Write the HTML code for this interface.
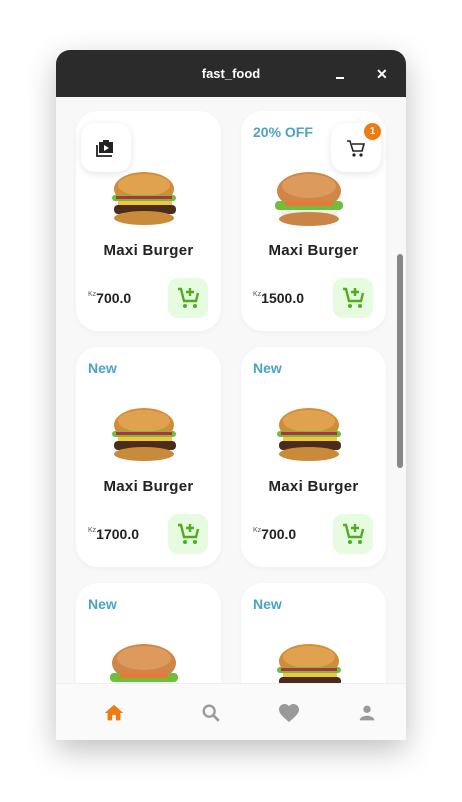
<!DOCTYPE html>
<html><head><meta charset="utf-8"><style>
*{margin:0;padding:0;box-sizing:border-box}
body{width:462px;height:802px;background:#fff;font-family:"Liberation Sans",sans-serif;position:relative;overflow:hidden}
.win{position:absolute;left:56px;top:50px;width:350px;height:690px;background:#f8f8f8;border-radius:14px 14px 0 0;overflow:hidden;box-shadow:0 10px 30px rgba(0,0,0,.25)}
.tb{position:absolute;left:0;top:0;width:350px;height:47px;background:#2b2b2b;color:#fff;font-size:13px;font-weight:bold;text-align:center;line-height:48px}
.card{position:absolute;width:145px;height:220px;background:#fff;border-radius:22px;box-shadow:0 2px 6px rgba(0,0,0,.04)}
.tag{position:absolute;left:12px;top:13px;color:#4aa3c4;font-weight:bold;font-size:14px}
.name{position:absolute;left:0;width:145px;top:131px;text-align:center;font-weight:bold;font-size:15px;color:#222;letter-spacing:.3px}
.price{position:absolute;left:12px;top:179px;font-weight:bold;font-size:14px;color:#222}
.price sup{font-size:7px;font-weight:normal;color:#555;vertical-align:7px}
.add{position:absolute;left:92px;top:167px;width:40px;height:40px;background:#e7fbe0;border-radius:10px}
.add svg{position:absolute;left:8px;top:8px}
.bg{position:absolute;left:28px;top:60px}
.fab{position:absolute;width:50px;height:49px;background:#fff;border-radius:14px;box-shadow:0 2px 8px rgba(0,0,0,.1)}
.nav{position:absolute;left:0;top:633px;width:350px;height:57px;background:#fafafa;border-top:1px solid #eee}
.scroll{position:absolute;left:341px;top:204px;width:6px;height:214px;background:#888;border-radius:3px}
</style></head><body>
<div class="win">
<div class="tb">fast_food
<span style="position:absolute;left:280px;top:27px;width:8px;height:2px;background:#fff"></span>
<span style="position:absolute;left:320px;top:0;font-size:14px">✕</span></div>

<svg width="0" height="0" style="position:absolute"><defs>
<g id="b1"><ellipse cx="40" cy="18" rx="30" ry="17" fill="#d38b3a"/><ellipse cx="40" cy="14" rx="26" ry="11" fill="#e0a24f"/>
<rect x="8" y="24" width="64" height="6" rx="3" fill="#6fbf3a"/><rect x="12" y="25" width="56" height="3" fill="#b3304a"/>
<rect x="14" y="30" width="54" height="5" fill="#f2c53b"/><rect x="10" y="34" width="62" height="9" rx="4" fill="#4a2c1c"/>
<ellipse cx="40" cy="47" rx="30" ry="7" fill="#c98a3a"/></g>
<g id="b2"><ellipse cx="40" cy="20" rx="32" ry="19" fill="#cf8646"/><ellipse cx="40" cy="15" rx="27" ry="12" fill="#dc9a5c"/>
<rect x="6" y="30" width="68" height="9" rx="4" fill="#6fbf3a"/><rect x="16" y="30" width="48" height="5" fill="#e8793c"/>
<rect x="12" y="39" width="56" height="5" fill="#f0eee8"/><ellipse cx="40" cy="48" rx="30" ry="7" fill="#c98546"/></g>
<g id="cart"><path d="M2 3h3l3 12h12l2-8" fill="none" stroke="#4caf1a" stroke-width="2.4"/><circle cx="9" cy="20" r="2" fill="#4caf1a"/><circle cx="19" cy="20" r="2" fill="#4caf1a"/><path d="M14 2v8M10 6h8" stroke="#4caf1a" stroke-width="2.4"/></g>
</defs></svg>

<div class="card" style="left:20px;top:61px">
<svg class="bg" width="80" height="56"><use href="#b1"/></svg>
<div class="name">Maxi Burger</div><div class="price"><sup>Kz</sup>700.0</div>
<div class="add"><svg width="24" height="24"><use href="#cart"/></svg></div></div>
<div class="card" style="left:185px;top:61px"><div class="tag">20% OFF</div>
<svg class="bg" width="80" height="56"><use href="#b2"/></svg>
<div class="name">Maxi Burger</div><div class="price"><sup>Kz</sup>1500.0</div>
<div class="add"><svg width="24" height="24"><use href="#cart"/></svg></div></div>

<div class="card" style="left:20px;top:297px"><div class="tag">New</div>
<svg class="bg" width="80" height="56"><use href="#b1"/></svg>
<div class="name">Maxi Burger</div><div class="price"><sup>Kz</sup>1700.0</div>
<div class="add"><svg width="24" height="24"><use href="#cart"/></svg></div></div>
<div class="card" style="left:185px;top:297px"><div class="tag">New</div>
<svg class="bg" width="80" height="56"><use href="#b1"/></svg>
<div class="name">Maxi Burger</div><div class="price"><sup>Kz</sup>700.0</div>
<div class="add"><svg width="24" height="24"><use href="#cart"/></svg></div></div>

<div class="card" style="left:20px;top:533px"><div class="tag">New</div>
<svg class="bg" width="80" height="56"><use href="#b2"/></svg></div>
<div class="card" style="left:185px;top:533px"><div class="tag">New</div>
<svg class="bg" width="80" height="56"><use href="#b1"/></svg></div>

<div class="fab" style="left:25px;top:73px"><svg width="20" height="20" style="position:absolute;left:15px;top:15px" viewBox="0 0 20 20"><path d="M7 4V2h6v2h4v11H3V4z" fill="#222"/><path d="M1 7v11h15" fill="none" stroke="#222" stroke-width="1.8"/><path d="M8 7l5 3-5 3z" fill="#fff"/></svg></div>
<div class="fab" style="left:275px;top:73px"><svg width="20" height="20" style="position:absolute;left:15px;top:16px" viewBox="0 0 20 20"><path d="M1 2h3l3 10h9l2-7H6" fill="none" stroke="#222" stroke-width="1.6"/><circle cx="8" cy="16" r="1.6" fill="#222"/><circle cx="15" cy="16" r="1.6" fill="#222"/></svg>
<div style="position:absolute;left:33px;top:0px;width:17px;height:17px;border-radius:50%;background:#f07a12;color:#fff;font-size:10px;font-weight:bold;text-align:center;line-height:17px">1</div></div>

<div class="scroll"></div>
<div class="nav">
<svg width="22" height="22" style="position:absolute;left:47px;top:18px" viewBox="0 0 24 24"><path d="M10 20v-6h4v6h5v-8h3L12 3 2 12h3v8z" fill="#f07a12"/></svg>
<svg width="22" height="22" style="position:absolute;left:144px;top:18px" viewBox="0 0 24 24"><circle cx="10" cy="10" r="6" fill="none" stroke="#999" stroke-width="2.5"/><path d="M14.5 14.5l6 6" stroke="#999" stroke-width="3"/></svg>
<svg width="24" height="24" style="position:absolute;left:221px;top:17px" viewBox="0 0 24 24"><path d="M12 21l-1.5-1.3C5 15 2 12 2 8.5 2 5.5 4.4 3 7.5 3c1.7 0 3.4.8 4.5 2.1C13.1 3.8 14.8 3 16.5 3 19.6 3 22 5.5 22 8.5c0 3.5-3 6.5-8.5 11.2z" fill="#999"/></svg>
<svg width="22" height="22" style="position:absolute;left:300px;top:18px" viewBox="0 0 24 24"><circle cx="12" cy="8" r="4" fill="#999"/><path d="M4 20c0-3 4-5 8-5s8 2 8 5z" fill="#999"/></svg>
</div>
</div>
</body></html>
